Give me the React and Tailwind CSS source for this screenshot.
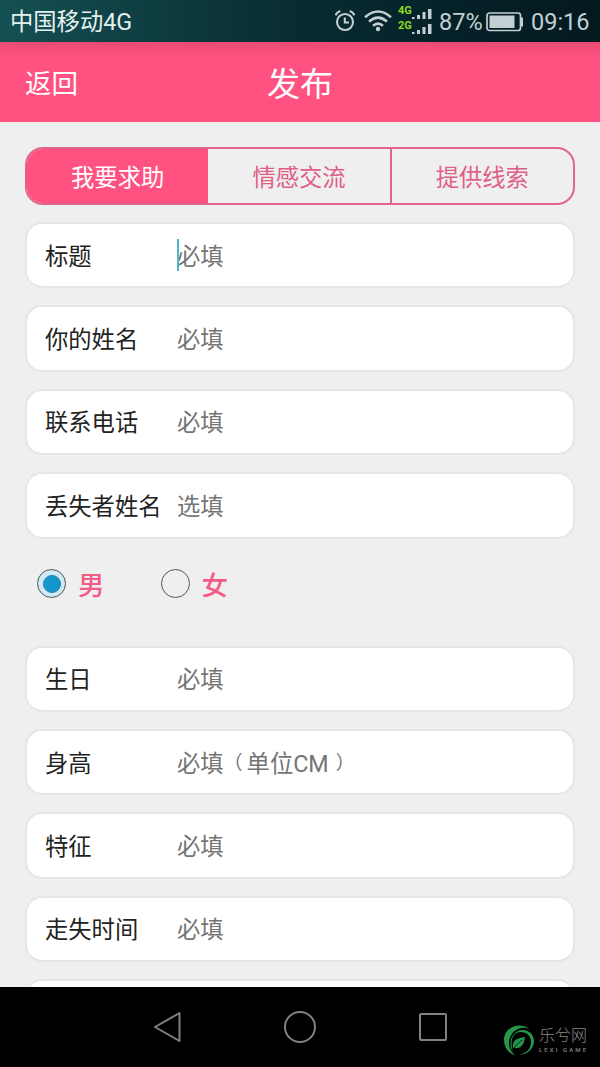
const TABS = ['我要求助', '情感交流', '提供线索']

const FIELDS_TOP = [
  { label: '标题', hint: '必填', focused: true },
  { label: '你的姓名', hint: '必填' },
  { label: '联系电话', hint: '必填' },
  { label: '丢失者姓名', hint: '选填' },
]

const FIELDS_BOTTOM = [
  { label: '生日', hint: '必填' },
  { label: '身高', hint: '必填', unit: '单位CM' },
  { label: '特征', hint: '必填' },
  { label: '走失时间', hint: '必填' },
  { label: '', hint: '' },
]

function AlarmIcon() {
  return (
    <svg width="22" height="24" viewBox="0 0 22 24" fill="none" stroke="#c3d0d3" strokeWidth="2.1" className="shrink-0">
      <circle cx="10" cy="13" r="8" />
      <path d="M9.800 8.500v5h4.200M.5 6.200Q2 3 5.300 2M19.500 6.200Q18 3 14.700 2" />
    </svg>
  )
}

function WifiIcon() {
  return (
    <svg width="28" height="22" viewBox="0 0 28 22" fill="none" stroke="#c3d0d3" strokeWidth="2.5" className="shrink-0">
      <path d="M1 7.200Q14-4.200 27 7.200M5 11.600Q14 3.600 23 11.600M9 15.800Q14 11.400 19 15.800" />
      <circle cx="14" cy="19" r="2.200" fill="#c3d0d3" stroke="none" />
    </svg>
  )
}

function SignalBars() {
  return (
    <svg width="20" height="10" viewBox="0 0 20 10" fill="#c3d0d3" className="shrink-0">
      <path d="M0 8h2.500v2H0zM5 6h3v4H5zM10.500 3h3v7h-3zM16 0h3.500v10H16z" />
    </svg>
  )
}

function Signal() {
  return (
    <div className="flex flex-col gap-[4px] w-[34px] shrink-0">
      {['4G', '2G'].map(name => (
        <div key={name} className="flex items-end h-[11px]">
          <span className="w-[14px] text-[11px] leading-[14px] font-bold text-[#8edb1d] mb-[1px]">{name}</span>
          <SignalBars />
        </div>
      ))}
    </div>
  )
}

function BatteryIcon() {
  return (
    <svg width="38" height="20" viewBox="0 0 38 20" className="shrink-0">
      <rect x="1" y="1" width="33.500" height="17.500" rx="2.500" fill="none" stroke="#c3d0d3" strokeWidth="1.700" />
      <path d="M3.500 3.500H28.500v12.500H3.500zM35 5.500h2v9h-2z" fill="#c3d0d3" />
    </svg>
  )
}

function StatusBar() {
  return (
    <div className="h-[42px] shrink-0 flex items-center px-[10px] bg-linear-to-r from-[#155052] via-[#082b32] via-50% to-[#03191f] text-[#c3d0d3]">
      <span className="text-[23.300px] leading-[42px] pt-[1px] text-[#e5f1f1]">中国移动4G</span>
      <div className="flex items-center ml-auto">
        <AlarmIcon />
        <div className="ml-[7px] flex"><WifiIcon /></div>
        <div className="ml-[6px] flex"><Signal /></div>
        <span className="ml-[7px] w-[47px] pt-[2px] text-[23.500px] leading-[40px] whitespace-nowrap">87%</span>
        <div className="pt-[1px]"><BatteryIcon /></div>
        <span className="ml-[7px] w-[59px] pt-[2px] text-[23.500px] leading-[40px] whitespace-nowrap">09:16</span>
      </div>
    </div>
  )
}

function Field({ label, hint, unit, focused }) {
  return (
    <div className="h-[66.400px] shrink-0 flex items-center bg-white border-2 border-[#e6e6e6] rounded-[17px] pl-[18px] text-[23.300px] leading-[34px]">
      <span className="w-[132px] pt-[3px] text-[#222] whitespace-nowrap">{label}</span>
      <div className="relative flex items-center text-[#747474] whitespace-nowrap">
        {focused && <span className="absolute left-0 w-[1.5px] h-[32px] bg-[#4bb6cc]" />}
        <span className="pt-[3px]">{hint}</span>
        {unit && (
          <span className="pt-[3px] flex">
            <span className="w-[23px] text-[19px]">（</span>
            {unit}
            <span className="pl-[7px] text-[19px]">）</span>
          </span>
        )}
      </div>
    </div>
  )
}

function Radio({ label, checked }) {
  return (
    <div className="flex items-center w-[123.500px]">
      <span
        className={`w-[29px] h-[29px] rounded-full border border-[#555] flex items-center justify-center ${checked ? 'bg-[#cdeaf5]' : ''}`}
      >
        {checked && <span className="w-[18px] h-[18px] rounded-full border border-[#2780a0] bg-[#1298cb]" />}
      </span>
      <span className="ml-[12px] pt-[3px] text-[26.500px] leading-[33px] font-medium text-[#f35c87]">{label}</span>
    </div>
  )
}

function Watermark() {
  return (
    <div className="absolute left-[503px] top-[37px] flex items-center">
      <svg width="32" height="32" viewBox="0 0 32 32" fill="none">
        <path d="M26 4.500C15-3 1 4 1 16c0 7 4 13 11 15.500-6-6-8-13-4-20C11.500 5 19 2.500 26 4.500Z" fill="#26964b" />
        <path d="M11 30C4 20 8 7 19 6c7-.5 12 5 12 11 0 8-7 14-16 14 8-1 13-6 13-13 0-6-4-10-10-10C9 8 6 18 11 30Z" fill="#26964b" />
        <path d="M10 24c-1-7 3-10 12-11-1 8-4 12-12 11Z" fill="#26964b" />
        <path d="M9 28c2-5 5-8 10-12" stroke="#000" strokeWidth=".8" />
      </svg>
      <div className="ml-[4px] flex flex-col text-[#888]">
        <span className="text-[16px] leading-[19px] font-light">乐兮网</span>
        <span className="text-[6px] leading-[9px] tracking-[2.100px] font-medium whitespace-nowrap">LEXI GAME</span>
      </div>
    </div>
  )
}

function NavBar() {
  return (
    <div className="relative h-[80px] shrink-0 bg-black flex items-center justify-center gap-[101px]">
      <svg width="32" height="32" viewBox="0 0 32 32" fill="none" stroke="#828282" strokeWidth="2" strokeLinejoin="round">
        <path d="M4 16 28.500 2v28Z" />
      </svg>
      <svg width="32" height="32" viewBox="0 0 32 32" fill="none" stroke="#828282" strokeWidth="2">
        <circle cx="16" cy="16" r="15" />
      </svg>
      <svg width="32" height="32" viewBox="0 0 32 32" fill="none" stroke="#828282" strokeWidth="2">
        <rect x="3" y="3" width="26" height="26" rx="1" />
      </svg>
      <Watermark />
    </div>
  )
}

export default function App() {
  return (
    <div className="w-[600px] h-[1067px] flex flex-col overflow-hidden bg-[#efefef] font-[Roboto,'Noto_Sans_CJK_SC',sans-serif]">
      <StatusBar />

      {/* Title bar */}
      <div className="h-[80px] shrink-0 grid grid-cols-3 items-center px-[25px] text-white bg-linear-to-b from-[#e84b74] to-[#ff5280] to-20%">
        <span className="pt-[3px] text-[26.500px] leading-[40px]">返回</span>
        <span className="pt-[5px] text-[33px] leading-[48px] text-center">发布</span>
      </div>

      {/* Form */}
      <div className="flex-1 min-h-0 overflow-hidden flex flex-col px-[25px] pt-[25px]">
        <div className="h-[58px] shrink-0 flex border-2 border-[#e0648c] rounded-[18px] overflow-hidden text-[23.300px] leading-[34px]">
          {TABS.map((tab, i) => (
            <div
              key={tab}
              className={`flex-1 flex items-center justify-center pt-[3px] ${i === 0 ? 'bg-[#ff5280] text-white' : 'text-[#df5f87]'} ${i === 2 ? 'border-l-2 border-[#e0648c]' : ''}`}
            >
              {tab}
            </div>
          ))}
        </div>

        <div className="mt-[17px] flex flex-col gap-[17px] shrink-0">
          {FIELDS_TOP.map(f => <Field key={f.label} {...f} />)}
        </div>

        <div className="h-[107px] shrink-0 flex items-start pt-[27px] pl-[12px]">
          <Radio label="男" checked />
          <Radio label="女" />
        </div>

        <div className="flex flex-col gap-[17px] shrink-0">
          {FIELDS_BOTTOM.map(f => <Field key={f.label} {...f} />)}
        </div>
      </div>

      <NavBar />
    </div>
  )
}
